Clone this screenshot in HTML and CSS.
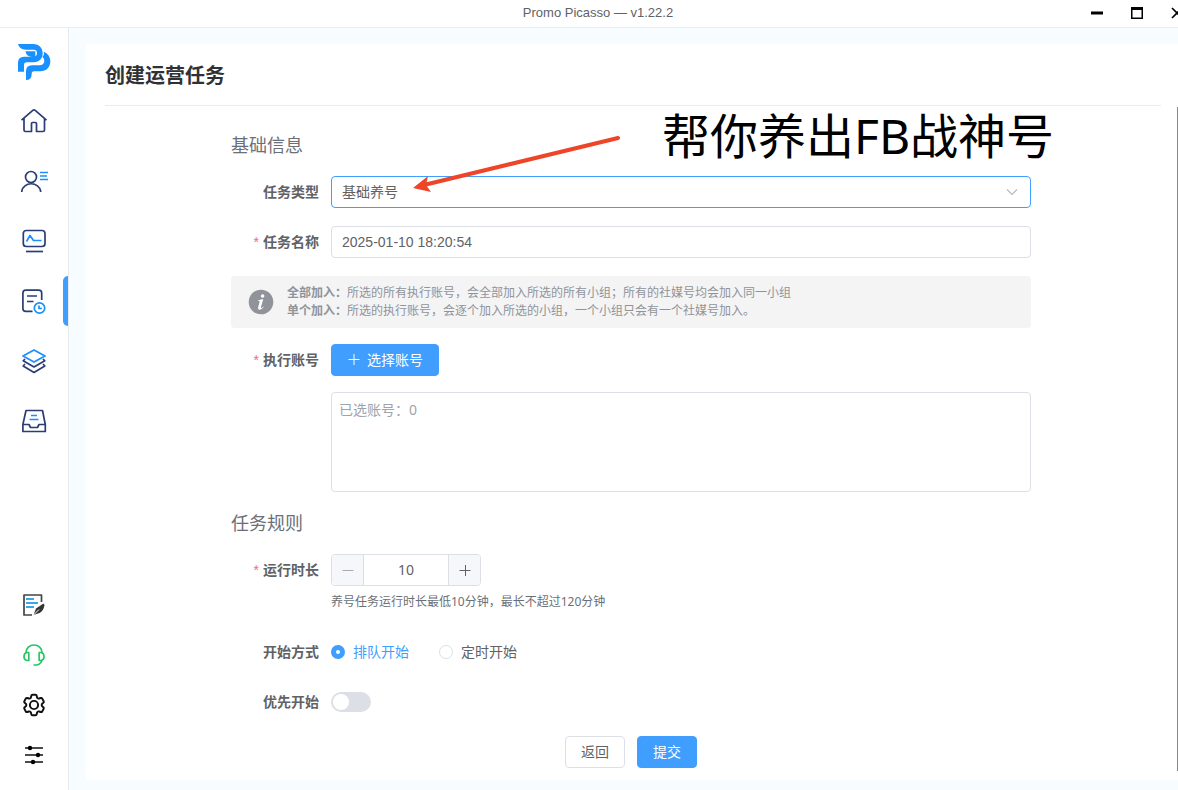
FILE: index.html
```html
<!DOCTYPE html>
<html lang="zh-CN">
<head>
<meta charset="utf-8">
<title>Promo Picasso</title>
<link rel="stylesheet" href="styles.css">
</head>
<body>
<div class="app">
  <header class="titlebar">
    <span class="titlebar-text">Promo Picasso — v1.22.2</span>
    <div class="window-controls">
      <button class="window-button" type="button" aria-label="最小化"><svg viewBox="0 0 14 14" width="14" height="14"><path d="M1 7h12" stroke="#000" stroke-width="3"/></svg></button>
      <button class="window-button" type="button" aria-label="最大化"><svg viewBox="0 0 14 14" width="14" height="14"><path d="M1 1h12v12H1zM2.500 4h9v7.500h-9z" fill="#000" fill-rule="evenodd"/></svg></button>
      <button class="window-button" type="button" aria-label="关闭"><svg viewBox="0 0 14 14" width="14" height="14"><path d="M2 2l10 10M12 2L2 12" stroke="#000" stroke-width="1.6"/></svg></button>
    </div>
  </header>
  <div class="body">
    <nav class="sidebar">
      <div class="nav-group">
        <div class="logo">
          <svg viewBox="0 0 120 132" width="40" height="44" fill="#1890ff">
            <path d="M12 12H58C75 12 86 24 86 40C86 56 75 67 60 67H38Q30 67 30 75V95H12V68Q12 50 30 50H60Q69 48 69 39Q69 29 59 29H36Q16 29 12 12Z"/>
            <path d="M34 34H64V51H54Q38 51 34 34Z"/>
            <path d="M89 35C102 40 109 51 109 64C109 82 97 94 79 94H60Q53 94 53 102Q53 120 36 120V94Q36 76 54 76H76Q91 74 91 62Q91 54 85 50Q92 45 89 35Z"/>
          </svg>
        </div>
        <button class="nav-item" type="button" aria-label="首页"><svg class="icon navy" viewBox="0 0 32 32"><path d="M3.500 15.200L14.800 5.400a1.800 1.800 0 0 1 2.400 0L28.500 15.200M6 13.500V25q0 1.500 1.500 1.500h6V18.500q0-1 1-1h3q1 0 1 1v8h6.500q1.500 0 1.500-1.500V13.500"/></svg></button>
        <button class="nav-item" type="button" aria-label="账号"><svg class="icon navy" viewBox="0 0 32 32"><circle cx="13" cy="12" r="5.500"/><path d="M3.800 27v-1a9.500 8.500 0 0 1 18.800 0v1"/><path class="azure" d="M22 7.500h8M22 11h7M22 14.500h8"/></svg></button>
        <button class="nav-item" type="button" aria-label="监控"><svg class="icon navy" viewBox="0 0 32 32"><rect x="5.300" y="5.500" width="21.700" height="16" rx="3"/><path d="M8 26.500h17"/><path class="azure" d="M8.500 16.500L12 10.500L15.500 15.500H23.500"/></svg></button>
        <button class="nav-item active" type="button" aria-label="任务"><svg class="icon navy" viewBox="0 0 32 32"><path d="M23.700 15V8q0-2.800-2.800-2.800H7.700q-2.800 0-2.800 2.800v15.500q0 2.800 2.800 2.800H14.500M9 11h10M9 16.500h6.500"/><g class="azure"><circle cx="21.500" cy="23" r="5.200"/><path d="M21 20.500v3h3"/></g></svg></button>
        <button class="nav-item" type="button" aria-label="素材"><svg class="icon navy" viewBox="0 0 32 32"><path d="M7 14L5.200 15.800L16 22L26.800 15.800L25 14M7 19L5.200 21L16 27.500L26.800 21L25 19"/><path class="azure" d="M16 5L27 11L16 17L5 11Z"/></svg></button>
        <button class="nav-item" type="button" aria-label="收件箱"><svg class="icon navy" viewBox="0 0 32 32"><path d="M8 5.500H24.500L27.300 19.500V26.500H4.900V19.500ZM4.900 19.500H11L12.500 22.500H19.500L21 19.500H27.300"/><path class="azure" d="M13 10.500h6M11.500 14.500h9"/></svg></button>
      </div>
      <div class="nav-group nav-bottom">
        <button class="nav-item small" type="button" aria-label="日志"><svg class="icon" viewBox="0 0 32 32"><path d="M23.500 13V6H6V26H14" stroke="#444"/><path d="M8 10h8M8 14h12M8 18h8" stroke="#3ea6e0" stroke-width="2"/><path d="M15.500 26L18 19.500L25.500 14.500L26.500 16Q25.500 22 21.500 24Z" fill="#333"/><path d="M15.500 26L21 20.500" stroke="#fff" stroke-width="1"/></svg></button>
        <button class="nav-item small" type="button" aria-label="客服"><svg class="icon green" viewBox="0 0 32 32"><path d="M8 13.500a8 7.500 0 0 1 16 0M10.800 13.500v8H9q-3-.5-3-4t3-4zM21.200 13.500v8H23q3-.5 3-4t-3-4zM24 21.500q-2 4.500-6 4.500h-2.500"/></svg></button>
        <button class="nav-item small" type="button" aria-label="设置"><svg class="icon" viewBox="2 2 28 28"><g transform="translate(4 4)" stroke="#111"><path d="M9.594 3.940c.09-.542.56-.94 1.110-.94h2.593c.55 0 1.020.398 1.110.94l.213 1.281c.063.374.313.686.645.87.074.04.147.083.22.127.325.196.72.257 1.075.124l1.217-.456a1.125 1.125 0 0 1 1.370.49l1.296 2.247a1.125 1.125 0 0 1-.26 1.431l-1.003.827c-.293.241-.438.613-.43.992a7.723 7.723 0 0 1 0 .255c-.008.378.137.75.43.991l1.004.827c.424.35.534.955.26 1.430l-1.298 2.247a1.125 1.125 0 0 1-1.369.491l-1.217-.456c-.355-.133-.75-.072-1.076.124a6.470 6.470 0 0 1-.22.128c-.331.183-.581.495-.644.869l-.213 1.281c-.09.543-.56.94-1.110.94h-2.594c-.55 0-1.019-.398-1.110-.94l-.213-1.281c-.062-.374-.312-.686-.644-.87a6.520 6.520 0 0 1-.22-.127c-.325-.196-.72-.257-1.076-.124l-1.217.456a1.125 1.125 0 0 1-1.369-.49l-1.297-2.247a1.125 1.125 0 0 1 .26-1.431l1.004-.827c.292-.24.437-.613.43-.991a6.932 6.932 0 0 1 0-.255c.007-.38-.138-.751-.43-.992l-1.004-.827a1.125 1.125 0 0 1-.26-1.430l1.297-2.247a1.125 1.125 0 0 1 1.370-.491l1.216.456c.356.133.751.072 1.076-.124.072-.044.146-.086.22-.128.332-.183.582-.495.644-.869l.214-1.280Z"/><circle cx="12" cy="12" r="3.600"/></g></svg></button>
        <button class="nav-item small" type="button" aria-label="偏好"><svg class="icon" viewBox="0 0 32 32"><path d="M7 9h18M7 16h18M7 23h18" stroke="#111"/><g fill="#000"><circle cx="12" cy="9" r="2.200"/><circle cx="20" cy="16" r="2.200"/><circle cx="15" cy="23" r="2.200"/></g></svg></button>
      </div>
    </nav>
    <main class="main">
      <section class="card">
        <h1 class="card-title">创建运营任务</h1>
        <form class="form">
          <h2 class="section-title">基础信息</h2>
          <div class="row">
            <label class="label" for="type">任务类型</label>
            <div class="select-wrap">
              <select class="field select" id="type"><option>基础养号</option></select>
              <svg class="chevron" viewBox="0 0 12 12" width="12" height="12"><path d="M1 3.500l5 5 5-5" fill="none" stroke="#b4b8bf" stroke-width="1.100"/></svg>
            </div>
          </div>
          <div class="row">
            <label class="label required" for="name">任务名称</label>
            <input class="field" id="name" type="text" value="2025-01-10 18:20:54">
          </div>
          <div class="tip">
            <svg class="tip-icon" viewBox="0 0 26 26" width="26" height="26"><circle cx="13" cy="13" r="12.300" fill="#909399"/><circle cx="14.600" cy="7" r="1.800" fill="#fff"/><path d="M10 11.500q2-.6 3.500-1.300h1.700l-2.200 7.800q-.3 1.500.8.900l1.500-1.300.4.500q-2.600 3.200-4.700 2.600-1.400-.5-.8-2.600l1.500-5.400q.2-.8-1.700-.7z" fill="#fff"/></svg>
            <div class="tip-text">
              <p><b>全部加入：</b>所选的所有执行账号，会全部加入所选的所有小组；所有的社媒号均会加入同一小组</p>
              <p><b>单个加入：</b>所选的执行账号，会逐个加入所选的小组，一个小组只会有一个社媒号加入。</p>
            </div>
          </div>
          <div class="row accounts-row">
            <span class="label required">执行账号</span>
            <button class="button primary" type="button"><svg viewBox="0 0 14 14" width="14" height="14"><path d="M7 2v11M1.500 7.500h11" stroke="#fff" stroke-width="1"/></svg>选择账号</button>
          </div>
          <div class="row list-row">
            <textarea class="field accounts" aria-label="已选账号" readonly>已选账号：0</textarea>
          </div>
          <h2 class="section-title">任务规则</h2>
          <div class="row">
            <label class="label required" for="duration">运行时长</label>
            <div class="stepper">
              <button class="step" type="button" aria-label="减少" disabled><svg viewBox="0 0 14 14" width="14" height="14"><path d="M1.500 7.500h11" stroke="#a8abb2"/></svg></button>
              <input class="step-value" id="duration" type="text" value="10">
              <button class="step" type="button" aria-label="增加"><svg viewBox="0 0 14 14" width="14" height="14"><path d="M1.500 7.500h11M7.500 2v11" stroke="#606266"/></svg></button>
            </div>
          </div>
          <p class="help">养号任务运行时长最低10分钟，最长不超过120分钟</p>
          <div class="row">
            <span class="label">开始方式</span>
            <label class="radio"><input type="radio" name="start" checked><span>排队开始</span></label>
            <label class="radio"><input type="radio" name="start"><span>定时开始</span></label>
          </div>
          <div class="row">
            <label class="label" for="priority">优先开始</label>
            <input class="switch" id="priority" type="checkbox" role="switch">
          </div>
          <div class="actions">
            <button class="button" type="button">返回</button>
            <button class="button primary" type="button">提交</button>
          </div>
          <svg class="arrow" viewBox="0 0 210 60" width="210" height="60" aria-hidden="true"><path d="M206 5L14 51.500" stroke="#ee4428" stroke-width="4" stroke-linecap="round"/><path d="M1 55L16 43L14 52L19 59Z" fill="#ee4428"/></svg>
          <div class="callout">帮你养出FB战神号</div>
        </form>
        <div class="scrollbar"></div>
      </section>
    </main>
  </div>
</div>
</body>
</html>
```
FILE: styles.css
```css
* { box-sizing: border-box; }

body {
  margin: 0;
  font-family: "Liberation Sans", "Noto Sans CJK SC", sans-serif;
  font-size: 14px;
  color: #606266;
  background: #fff;
}

h1, h2, p { margin: 0; }

button, input, select, textarea {
  font: inherit;
  color: inherit;
}

svg { display: block; }

.app {
  display: flex;
  flex-direction: column;
  height: 100vh;
  overflow: hidden;
}

.titlebar {
  display: flex;
  flex: none;
  align-items: center;
  justify-content: center;
  position: relative;
  height: 28px;
  padding: 0 0 2px 18px;
  border-bottom: 1px solid #ebeef0;
  font-size: 13px;
}

.window-controls {
  display: flex;
  gap: 26px;
  position: absolute;
  top: 6px;
  right: -6px;
}

.window-button {
  padding: 0;
  border: 0;
  background: none;
}

.body {
  display: flex;
  flex: 1;
  min-height: 0;
}

.sidebar {
  display: flex;
  flex: none;
  flex-direction: column;
  justify-content: space-between;
  width: 69px;
  padding: 3px 0 10px;
  border-right: 1px solid #e8eaec;
}

.nav-group {
  display: flex;
  flex-direction: column;
}

.logo {
  display: flex;
  align-items: center;
  justify-content: center;
  height: 60px;
  padding-top: 2px;
}

.nav-item {
  display: flex;
  align-items: center;
  justify-content: center;
  position: relative;
  height: 60px;
  padding: 0;
  border: 0;
  background: none;
}

.nav-item.small { height: 50px; }

.nav-item.active::after {
  content: "";
  position: absolute;
  top: 5px;
  right: 0;
  width: 5px;
  height: 50px;
  border-radius: 5px 0 0 5px;
  background: #409eff;
}

.icon {
  width: 32px;
  height: 32px;
  fill: none;
  stroke-width: 1.7;
  stroke-linejoin: round;
}

.navy { stroke: #2b3d75; }
.azure { stroke: #1890ff; }
.green { stroke: #27c565; }

.main {
  flex: 1;
  min-width: 0;
  padding: 16px 0 10px 16px;
  background: #f6fcff;
}

.card {
  position: relative;
  height: 100%;
  padding: 12px 21px 0 20px;
  border-radius: 4px 0 0 4px;
  background: #fff;
}

.card-title {
  height: 50px;
  margin-right: -4px;
  border-bottom: 1px solid #ebebeb;
  font-size: 20px;
  line-height: 40px;
  color: #303133;
}

.form {
  position: relative;
  width: 800px;
  max-width: 100%;
  margin: 0 auto;
  padding-top: 27px;
}

.section-title {
  margin-bottom: 17px;
  font-size: 18px;
  font-weight: 400;
  line-height: 26px;
  color: #6b6f78;
}

.row {
  display: flex;
  align-items: center;
  min-height: 32px;
  margin-bottom: 18px;
}

.label {
  flex: none;
  width: 100px;
  padding: 0 12px 2px 0;
  font-weight: 700;
  text-align: right;
}

.required::before {
  content: "*";
  margin-right: 4px;
  font-weight: 400;
  color: #f56c6c;
}

.field {
  flex: 1;
  min-width: 0;
  height: 32px;
  padding: 0 10px;
  border: 1px solid #dcdfe6;
  border-radius: 4px;
  outline: 0;
  background: #fff;
}

.select-wrap {
  display: flex;
  flex: 1;
  position: relative;
}

.select {
  appearance: none;
  border-color: #409eff;
}

.chevron {
  position: absolute;
  top: 10px;
  right: 13px;
  pointer-events: none;
}

.tip {
  display: flex;
  align-items: center;
  gap: 13px;
  min-height: 52px;
  margin-bottom: 16px;
  padding: 0 17px;
  border-radius: 4px;
  background: #f4f4f5;
  font-size: 12px;
  line-height: 18px;
  color: #909399;
}

.tip-icon { flex: none; }

.accounts-row { margin-bottom: 16px; }

.list-row {
  margin-bottom: 19px;
  padding-left: 100px;
}

.accounts {
  height: 100px;
  padding: 6px 7px;
  resize: none;
  line-height: 22px;
  font-family: "Noto Sans", "Noto Sans CJK SC", sans-serif;
  color: #a0a3aa;
}

.button {
  display: flex;
  align-items: center;
  gap: 6px;
  height: 32px;
  padding: 0 15px 2px;
  border: 1px solid #dcdfe6;
  border-radius: 4px;
  background: #fff;
}

.primary {
  border-color: #409eff;
  background: #409eff;
  color: #fff;
}

.stepper {
  display: flex;
  width: 150px;
  height: 32px;
  overflow: hidden;
  border: 1px solid #dcdfe6;
  border-radius: 4px;
}

.step {
  display: flex;
  flex: none;
  align-items: center;
  justify-content: center;
  width: 31px;
  padding: 0;
  border: 0;
  background: #f5f7fa;
}

.step-value {
  flex: 1;
  min-width: 0;
  padding: 0 0 2px;
  border: solid #dcdfe6;
  border-width: 0 1px;
  outline: 0;
  font-family: "Noto Sans", sans-serif;
  text-align: center;
}

.help {
  margin: -10px 0 26px 100px;
  font-family: "Noto Sans", "Noto Sans CJK SC", sans-serif;
  font-size: 12px;
  line-height: 16px;
  color: #6b6f78;
}

.radio {
  display: flex;
  align-items: center;
  gap: 8px;
  margin-right: 30px;
}

.radio span { padding-bottom: 2px; }

.radio input {
  appearance: none;
  width: 14px;
  height: 14px;
  margin: 0;
  border: 1px solid #dcdfe6;
  border-radius: 50%;
  background: #fff;
}

.radio input:checked {
  border: 5px solid #409eff;
}

.radio input:checked + span { color: #409eff; }

.switch {
  appearance: none;
  display: flex;
  align-items: center;
  width: 40px;
  height: 20px;
  margin: 0;
  padding: 2px;
  border-radius: 10px;
  background: #dcdfe6;
}

.switch::before {
  content: "";
  width: 16px;
  height: 16px;
  border-radius: 50%;
  background: #fff;
}

.actions {
  display: flex;
  justify-content: center;
  gap: 12px;
}

.arrow {
  position: absolute;
  top: 27px;
  left: 181px;
  fill: none;
}

.callout {
  position: absolute;
  top: 0;
  left: 431px;
  font-family: "Noto Sans", "Noto Sans CJK SC", sans-serif;
  font-size: 48px;
  line-height: 60px;
  white-space: nowrap;
  color: #000;
}

.scrollbar {
  position: absolute;
  top: 63px;
  right: 0;
  bottom: 9px;
  width: 1px;
  background: #888;
}
```
